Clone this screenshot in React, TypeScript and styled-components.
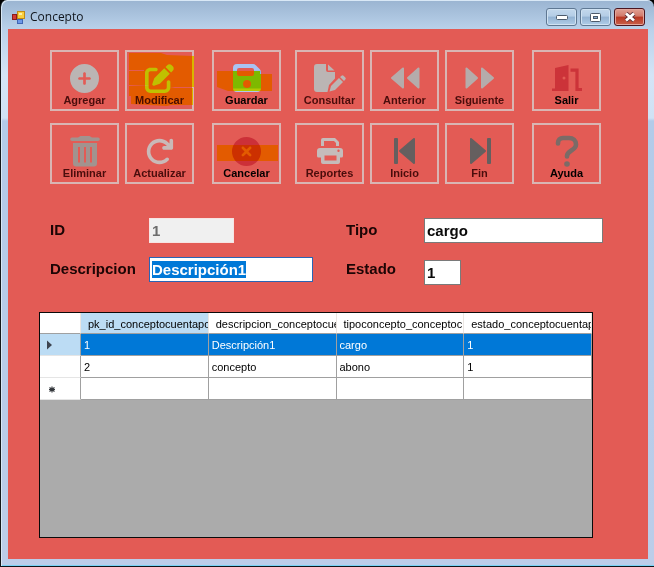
import React, { useEffect, useRef } from "react";
import styled, { createGlobalStyle, css } from "styled-components";
import {
  FaCirclePlus,
  FaPenToSquare,
  FaArrowRotateRight,
  FaCircleXmark,
} from "react-icons/fa6";

const GlobalStyle = createGlobalStyle`
  * { box-sizing: border-box; }
  body { margin: 0; background: #000; font-family: "Liberation Sans", Arial, sans-serif; }
`;

const Window = styled.div`
  min-height: 100vh;
  display: flex;
  flex-direction: column;
  padding: 0 6px 7px 7px;
  border-left: 1px solid #15181c;
  border-bottom: 1px solid #10141a;
  border-radius: 7px 7px 0 0;
  background: linear-gradient(#9ab4d1 0, #b9d1ea 29px, #d4e4f6 75px, #d0e2f5 118px, #b3cbe9 121px, #bccde9 100%);
  box-shadow: inset 1px 1px 0 #d9e8f6, inset 0 -1px 0 #78d3f5;
`;

const TitleBar = styled.header`
  height: 29px;
  display: flex;
  align-items: center;
  padding: 5px 3px 0 4px;
  gap: 5px;
`;

const Title = styled.h1`
  flex: 1;
  margin: 0;
  font: 400 12px/16px "Open Sans", "Noto Sans", sans-serif;
  color: #10151c;
`;

const CaptionButtons = styled.div`
  display: flex;
  gap: 3px;
`;

const CaptionButton = styled.button<{ $close?: boolean }>`
  width: 31px;
  height: 18px;
  padding: 0;
  display: grid;
  place-items: center;
  border: 1px solid ${(p) => (p.$close ? "#4b1620" : "#5f7893")};
  border-radius: 3px;
  background: ${(p) =>
    p.$close
      ? "linear-gradient(#e0a094 0, #d2796a 45%, #b93622 50%, #c9604a 100%)"
      : "linear-gradient(#c3d8ec 0, #b4cde6 45%, #93b2d2 50%, #b0cde8 100%)"};
  box-shadow: inset 0 0 0 1px ${(p) => (p.$close ? "#e3a79c" : "#d0e2f2")};
`;

const Content = styled.main`
  flex: 1;
  display: flex;
  flex-direction: column;
  padding: 21px 45px 21px 42px;
  background: #e35b55;
`;

const Toolbar = styled.div`
  display: flex;
`;

const ToolGroup = styled.div<{ $columns: number; $lead: number }>`
  display: grid;
  grid-template-columns: repeat(${(p) => p.$columns}, 69px);
  gap: 12px 6px;
  margin-left: ${(p) => p.$lead}px;
`;

const ToolButton = styled.button`
  position: relative;
  height: 61px;
  padding: 10px 0 0;
  display: flex;
  flex-direction: column;
  align-items: center;
  border: 2px solid #d9b5b3;
  background: transparent;
  font: bold 11px/13px "Liberation Sans", Arial, sans-serif;
  color: #050000;
  white-space: nowrap;

  &:disabled {
    color: #4a0d0c;
  }
`;

const IconBox = styled.span<{ $color: string }>`
  width: 34px;
  height: 32px;
  display: grid;
  place-items: center;
  color: ${(p) => p.$color};

  svg {
    display: block;
  }
`;

const Marker = styled.svg`
  position: absolute;
  left: -2px;
  top: -2px;
  mix-blend-mode: multiply;
  pointer-events: none;
`;

const Form = styled.form`
  display: grid;
  grid-template-columns: 99px minmax(0, 197fr) 78px minmax(0, 179fr);
  grid-template-rows: 25px 28px;
  row-gap: 14px;
  margin-top: 34px;
`;

const Label = styled.label`
  font: bold 15px/24px "Liberation Sans", Arial, sans-serif;
  color: #1c0505;
`;

const Field = styled.input<{ $width: string; $low?: boolean }>`
  width: ${(p) => p.$width};
  height: 25px;
  padding: 0 2px;
  align-self: ${(p) => (p.$low ? "end" : "start")};
  border: 1px solid #7a7a7a;
  border-radius: 0;
  outline: none;
  background: #fff;
  color: #0a0a0a;
  font: bold 15px/19px "Liberation Sans", Arial, sans-serif;

  &:focus {
    border-color: #2a64b4;
  }
  &:disabled {
    border-color: #f7e4e3;
    background: #f0f0f0;
    color: #6d6d6d;
  }
  &::selection {
    background: #0078d7;
    color: #fff;
  }
`;

const GridPanel = styled.section`
  flex: 1;
  margin: 27px 10px 0 -11px;
  border: 1px solid #0a0a0a;
  background: #ababab;
`;

const Table = styled.table`
  width: 100%;
  table-layout: fixed;
  border-collapse: separate;
  border-spacing: 0;
  font-size: 11px;
  line-height: 15px;
  color: #000;
`;

const IndicatorCol = styled.col`
  width: 41px;
`;

const cell = css`
  height: 22px;
  border-right: 1px solid #a0a0a0;
  border-bottom: 1px solid #a0a0a0;
  text-align: left;
  font-weight: 400;
  white-space: nowrap;
  overflow: hidden;
`;

const HeadCell = styled.th<{ $active?: boolean }>`
  ${cell}
  height: 21px;
  padding: 2px 0 0 7px;
  border-right-color: #ebe6e2;
  background: ${(p) => (p.$active ? "#bcdcf4" : "#fff")};
`;

const RowHead = styled.th<{ $active?: boolean }>`
  ${cell}
  padding: 0 0 0 6px;
  border-bottom-color: #e5e5e5;
  background: ${(p) => (p.$active ? "#bcdcf4" : "#fff")};

  svg {
    display: block;
  }
`;

const Cell = styled.td<{ $active?: boolean }>`
  ${cell}
  padding: 1px 3px 0;
  background: ${(p) => (p.$active ? "#0078d7" : "#fff")};
  color: ${(p) => (p.$active ? "#fff" : "#000")};
`;

const SILVER = "#bbb5b4";

const AppIcon = () => (
  <svg width="13" height="13" viewBox="0 0 13 13" aria-hidden="true">
    <rect x="0.5" y="3.5" width="4" height="5" fill="#d43b35" stroke="#8c1d1d" />
    <rect x="5.5" y="0.5" width="7" height="7" fill="#fbcf3d" stroke="#c18a14" />
    <rect x="7" y="2" width="3" height="2" fill="#fff0a6" />
    <rect x="5.5" y="8.5" width="5" height="4" fill="#6d98e8" stroke="#4066b4" />
  </svg>
);

const SaveIcon = () => (
  <svg width="28" height="28" viewBox="0 0 28 28">
    <defs>
      <linearGradient id="disk" x1="0" y1="0" x2="0" y2="1">
        <stop offset="0.22" stopColor="#a9c3f2" />
        <stop offset="0.25" stopColor="#7eb9ee" />
        <stop offset="0.85" stopColor="#7eb9ee" />
        <stop offset="0.9" stopColor="#b4c8ea" />
      </linearGradient>
    </defs>
    <path
      fill="url(#disk)"
      fillRule="evenodd"
      d="M4 0h16a4 4 0 0 1 2.800 1.200l4 4A4 4 0 0 1 28 8v16a4 4 0 0 1-4 4H4a4 4 0 0 1-4-4V4a4 4 0 0 1 4-4ZM6 4a2 2 0 0 0-2 2v4a2 2 0 0 0 2 2h13a2 2 0 0 0 2-2V6a2 2 0 0 0-2-2ZM14 16a4 4 0 1 0 0 8 4 4 0 0 0 0-8Z"
    />
  </svg>
);

const TrashIcon = () => (
  <svg width="30" height="32" viewBox="0 0 30 32">
    <path
      d="M2 2.500h6L10.500 1h9L22 2.500h6a1.800 1.800 0 0 1 0 3.600H2a1.800 1.800 0 0 1 0-3.600Z"
      fill="#a1938f"
    />
    <path
      fillRule="evenodd"
      fill="#a1938f"
      d="M3 8h24v20.500a3 3 0 0 1-3 3H6a3 3 0 0 1-3-3ZM8 12v15.500h2V12ZM14 12v15.500h2V12ZM20 12v15.500h2V12Z"
    />
  </svg>
);

const FilePenIcon = () => (
  <svg width="32" height="28" viewBox="0 0 32 28">
    <g fill="currentColor">
      <path d="M3 0h9v6a2 2 0 0 0 2 2h7v6.500l-6 6.500-1.500 7H3a3 3 0 0 1-3-3V3a3 3 0 0 1 3-3Z" />
      <path d="M14 0.500 20.500 6.500H14Z" />
      <path d="m25 14 4 4-8 8-5.500 1.500 1.500-5.500Z" />
      <path d="m26 13 1.500-1.300a1.500 1.500 0 0 1 2 0l1.800 1.800a1.500 1.500 0 0 1 0 2L30 17Z" />
    </g>
  </svg>
);

const PrintIcon = () => (
  <svg width="28" height="28" viewBox="0 0 28 28">
    <g fill="currentColor">
      <path d="M5 9V3a2 2 0 0 1 2-2h12l4 4v4h-3V6l-2-2H8v5Z" />
      <path
        fillRule="evenodd"
        d="M4 11h20a3 3 0 0 1 3 3v5a1.500 1.500 0 0 1-1.500 1.500H24V16H5v4.500H2.500A1.500 1.500 0 0 1 1 19v-5a3 3 0 0 1 3-3ZM22.500 12.500a1.200 1.200 0 1 0 0 2.400 1.200 1.200 0 0 0 0-2.400Z"
      />
      <path
        fillRule="evenodd"
        d="M5 16h19v9a2 2 0 0 1-2 2H7a2 2 0 0 1-2-2ZM8.500 18.500v5h12v-5Z"
      />
    </g>
  </svg>
);

const SeekIcon = ({ forward = false }: { forward?: boolean }) => (
  <svg width="30" height="24" viewBox="0 0 30 24">
    <g
      fill="currentColor"
      stroke="currentColor"
      strokeWidth="2"
      strokeLinejoin="round"
      transform={forward ? "translate(30 0) scale(-1 1)" : undefined}
    >
      <path d="M2 12 13 2.500v19Z" />
      <path d="M18 12 28.500 2.500v19Z" />
    </g>
  </svg>
);

const EdgeIcon = ({ forward = false }: { forward?: boolean }) => (
  <svg width="22" height="28" viewBox="0 0 22 28">
    <g fill="currentColor" transform={forward ? "translate(22 0) scale(-1 1)" : undefined}>
      <rect x="0" y="1" width="4" height="26" rx="1" />
      <path d="M6 14 20 2v24Z" stroke="currentColor" strokeWidth="2" strokeLinejoin="round" />
    </g>
  </svg>
);

const DoorIcon = () => (
  <svg width="30" height="28" viewBox="0 0 30 28">
    <path
      fillRule="evenodd"
      fill="currentColor"
      d="M3 4 16.500 1v26H0v-2.500h3ZM12 12.500a1.500 1.500 0 1 0 0 3 1.500 1.500 0 0 0 0-3Z"
    />
    <path d="M18.500 6.200h6.500v19.300H30" fill="none" stroke="currentColor" strokeWidth="3.200" />
  </svg>
);

const HelpIcon = () => (
  <svg width="24" height="32" viewBox="0 0 24 32">
    <path
      d="M3 8.500V8c0-3 2-5 5-5h6c4 0 7 2.500 7 6.500 0 6-9 6-9 11.500v.5"
      fill="none"
      stroke="currentColor"
      strokeWidth="4.600"
      strokeLinecap="round"
    />
    <circle cx="12" cy="29" r="2.800" fill="currentColor" />
  </svg>
);

type Tool = {
  label: string;
  icon: React.ReactNode;
  color: string;
  enabled?: boolean;
  marker?: string;
};

const toolGroups: { columns: number; lead: number; tools: Tool[] }[] = [
  {
    columns: 2,
    lead: 0,
    tools: [
      { label: "Agregar", icon: <FaCirclePlus size={29} />, color: SILVER },
      {
        label: "Modificar",
        icon: <FaPenToSquare size={29} />,
        color: "#c0c0b4",
        marker: "M4 3H36L42 5L69 6V37H47L4 35V21H19V20H4ZM4 36H40L50 38H68V55H46L42 56L6 54V46H4Z",
      },
      { label: "Eliminar", icon: <TrashIcon />, color: SILVER },
      { label: "Actualizar", icon: <FaArrowRotateRight size={29} />, color: "#c9b9b8" },
    ],
  },
  {
    columns: 1,
    lead: 18,
    tools: [
      {
        label: "Guardar",
        icon: <SaveIcon />,
        color: "#9cc4f0",
        enabled: true,
        marker: "M5 21H48V24H60V41H16L5 37Z",
      },
      {
        label: "Cancelar",
        icon: <FaCircleXmark size={29} />,
        color: "#cc3038",
        enabled: true,
        marker: "M5 22H66V38H5Z",
      },
    ],
  },
  {
    columns: 1,
    lead: 14,
    tools: [
      { label: "Consultar", icon: <FilePenIcon />, color: SILVER },
      { label: "Reportes", icon: <PrintIcon />, color: "#c5bcbb" },
    ],
  },
  {
    columns: 2,
    lead: 6,
    tools: [
      { label: "Anterior", icon: <SeekIcon />, color: "#b5acab" },
      { label: "Siguiente", icon: <SeekIcon forward />, color: "#b5acab" },
      { label: "Inicio", icon: <EdgeIcon />, color: "#655f5f" },
      { label: "Fin", icon: <EdgeIcon forward />, color: "#655f5f" },
    ],
  },
  {
    columns: 1,
    lead: 18,
    tools: [
      { label: "Salir", icon: <DoorIcon />, color: "#cc3339", enabled: true },
      { label: "Ayuda", icon: <HelpIcon />, color: "#7b6b67", enabled: true },
    ],
  },
];

const columns = [
  "pk_id_conceptocuentapo",
  "descripcion_conceptocue",
  "tipoconcepto_conceptoc",
  "estado_conceptocuentap",
];

const rows = [
  ["1", "Descripción1", "cargo", "1"],
  ["2", "concepto", "abono", "1"],
  ["", "", "", ""],
];

export default function App() {
  const description = useRef<HTMLInputElement>(null);

  useEffect(() => {
    description.current?.focus();
    description.current?.select();
  }, []);

  return (
    <>
      <GlobalStyle />
      <Window>
        <TitleBar>
          <AppIcon />
          <Title>Concepto</Title>
          <CaptionButtons>
            <CaptionButton aria-label="Minimizar">
              <svg width="12" height="6" viewBox="0 0 12 6">
                <rect x="0.5" y="1.500" width="11" height="4" rx="1" fill="#fff" stroke="#4c5a6b" />
              </svg>
            </CaptionButton>
            <CaptionButton aria-label="Maximizar">
              <svg width="11" height="9" viewBox="0 0 11 9">
                <rect x="0.5" y="0.5" width="10" height="8" rx="1" fill="#fff" stroke="#4c5a6b" />
                <rect x="3.500" y="3.500" width="4" height="2" fill="#8fb0d2" stroke="#4c5a6b" />
              </svg>
            </CaptionButton>
            <CaptionButton aria-label="Cerrar" $close>
              <svg width="12" height="10" viewBox="0 0 12 10">
                <path d="m2 1.500 8 7m0-7-8 7" stroke="#5c3038" strokeWidth="4.400" />
                <path d="m2 1.500 8 7m0-7-8 7" stroke="#fff" strokeWidth="2.800" />
              </svg>
            </CaptionButton>
          </CaptionButtons>
        </TitleBar>
        <Content>
          <Toolbar role="toolbar">
            {toolGroups.map((group, i) => (
              <ToolGroup key={i} $columns={group.columns} $lead={group.lead}>
                {group.tools.map((tool) => (
                  <ToolButton key={tool.label} type="button" disabled={!tool.enabled}>
                    <IconBox $color={tool.color}>{tool.icon}</IconBox>
                    {tool.label}
                    {tool.marker && (
                      <Marker width="69" height="61" viewBox="0 0 69 61" aria-hidden="true">
                        <path d={tool.marker} fill="#ffff00" />
                      </Marker>
                    )}
                  </ToolButton>
                ))}
              </ToolGroup>
            ))}
          </Toolbar>
          <Form>
            <Label htmlFor="id">ID</Label>
            <Field id="id" $width="85px" defaultValue="1" disabled />
            <Label htmlFor="tipo">Tipo</Label>
            <Field id="tipo" $width="100%" defaultValue="cargo" />
            <Label htmlFor="descripcion">Descripcion</Label>
            <Field id="descripcion" ref={description} $width="164px" defaultValue="Descripción1" />
            <Label htmlFor="estado">Estado</Label>
            <Field id="estado" $width="37px" $low defaultValue="1" />
          </Form>
          <GridPanel>
            <Table>
              <colgroup>
                <IndicatorCol />
                {columns.map((c) => (
                  <col key={c} />
                ))}
              </colgroup>
              <thead>
                <tr>
                  <HeadCell as="td" />
                  {columns.map((c, i) => (
                    <HeadCell key={c} scope="col" $active={i === 0}>
                      {c}
                    </HeadCell>
                  ))}
                </tr>
              </thead>
              <tbody>
                {rows.map((r, i) => (
                  <tr key={i}>
                    <RowHead scope="row" $active={i === 0}>
                      {i === 0 && (
                        <svg width="7" height="10" viewBox="0 0 7 10">
                          <path d="M1 0.500 6 5 1 9.500Z" fill="#3d4450" />
                        </svg>
                      )}
                      {i === 2 && (
                        <svg width="12" height="8" viewBox="0 0 12 8">
                          <path
                            d="M6 1.500v6M3.500 2.500l5 4m0-4-5 4M3 4.500h6"
                            stroke="#33363b"
                            strokeWidth="1.200"
                          />
                        </svg>
                      )}
                    </RowHead>
                    {r.map((v, j) => (
                      <Cell key={j} $active={i === 0}>
                        {v}
                      </Cell>
                    ))}
                  </tr>
                ))}
              </tbody>
            </Table>
          </GridPanel>
        </Content>
      </Window>
    </>
  );
}
